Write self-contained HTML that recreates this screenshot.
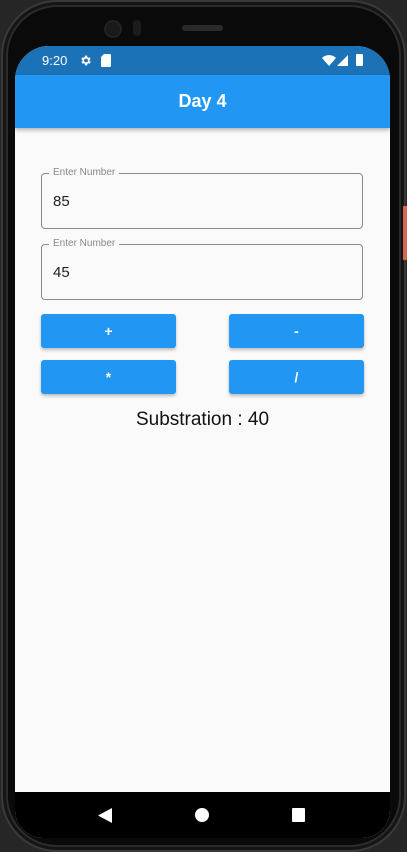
<!DOCTYPE html>
<html><head><style>
*{margin:0;padding:0;box-sizing:border-box}
body{width:407px;height:852px;background:#262626;overflow:hidden;position:relative;font-family:"Liberation Sans",Roboto,sans-serif}
.phone{position:absolute;left:1px;top:0;width:405px;height:852px;border-radius:56px;background:#0a0a0a;border:2px solid #3a3a3a;box-shadow:inset 0 0 0 3px #151515,inset 0 0 0 5px #2c2c2c}
.screen{position:absolute;left:15px;top:46px;width:375px;height:792px;border-radius:34px 34px 28px 28px;overflow:hidden;background:#fafafa}
.status{height:29px;background:#1c72b6;color:#fff;font-size:13px;position:relative}
.app{height:53px;background:#2196f3;color:#fff;font-weight:bold;font-size:18px;text-align:center;line-height:53px;box-shadow:0 2px 4px rgba(0,0,0,.3);position:relative;z-index:1}
.field{position:absolute;left:26px;width:322px;height:56px;border:1px solid #8a8a8a;border-radius:4px}
.field .lab{position:absolute;left:7px;top:-7px;background:#fafafa;padding:0 4px;font-size:10px;color:#888}
.field .v{position:absolute;left:11px;top:19px;font-size:15px;color:#222}
.btn{position:absolute;width:135px;height:34px;background:#2196f3;border-radius:3px;color:#fff;font-size:14px;font-weight:bold;text-align:center;line-height:34px;box-shadow:0 2px 3px rgba(0,0,0,.25)}
.nav{position:absolute;left:0;top:746px;width:375px;height:46px;background:#000}
</style></head><body>
<div class="phone"></div>
<div style="position:absolute;left:104px;top:20px;width:18px;height:18px;border-radius:50%;background:#1a1a1a;border:2px solid #222"></div>
<div style="position:absolute;left:133px;top:20px;width:8px;height:16px;border-radius:4px;background:#1c1c1c"></div>
<div style="position:absolute;left:182px;top:25px;width:41px;height:6px;border-radius:3px;background:#2a2a2a"></div>
<div style="position:absolute;left:403px;top:206px;width:4px;height:54px;background:#d9684e"></div>
<div class="screen">
 <div class="status">
  <span style="position:absolute;left:27px;top:7px">9:20</span>
  <svg style="position:absolute;left:64px;top:8px" width="13" height="13" viewBox="0 0 24 24"><path fill="#fff" d="M19.4 13a7.5 7.5 0 000-2l2.1-1.6-2-3.5-2.5 1a7 7 0 00-1.7-1L15 3h-4l-.4 2.9a7 7 0 00-1.7 1l-2.5-1-2 3.5L6.6 11a7.5 7.5 0 000 2l-2.1 1.6 2 3.5 2.5-1a7 7 0 001.7 1L11 21h4l.4-2.9a7 7 0 001.7-1l2.5 1 2-3.5zM13 15.5a3.5 3.5 0 110-7 3.5 3.5 0 010 7z"/></svg>
  <svg style="position:absolute;left:86px;top:8px" width="10" height="13" viewBox="0 0 10 13"><path fill="#fff" d="M3 0h6a1 1 0 011 1v11a1 1 0 01-1 1H1a1 1 0 01-1-1V3z"/></svg>
  <svg style="position:absolute;left:307px;top:9px" width="14" height="11" viewBox="0 0 14 11"><path fill="#fff" d="M0 3a10 10 0 0114 0L7 11z"/></svg>
  <svg style="position:absolute;left:322px;top:9px" width="11" height="11" viewBox="0 0 11 11"><path fill="#fff" d="M11 0v11H0z"/></svg>
  <div style="position:absolute;left:341px;top:8px;width:7px;height:12px;background:#fff;border-radius:1px"></div>
 </div>
 <div class="app">Day 4</div>
 <div class="field" style="top:127px"><span class="lab">Enter Number</span><span class="v">85</span></div>
 <div class="field" style="top:198px"><span class="lab">Enter Number</span><span class="v">45</span></div>
 <div class="btn" style="left:26px;top:268px">+</div>
 <div class="btn" style="left:214px;top:268px">-</div>
 <div class="btn" style="left:26px;top:314px">*</div>
 <div class="btn" style="left:214px;top:314px">/</div>
 <div style="position:absolute;left:0;width:375px;top:363px;text-align:center;font-size:19px;color:#111">Substration : 40</div>
 <div class="nav">
  <svg style="position:absolute;left:83px;top:16px" width="14" height="15" viewBox="0 0 14 15"><path fill="#fff" d="M0 7.5L14 0v15z"/></svg>
  <div style="position:absolute;left:180px;top:16px;width:14px;height:14px;border-radius:50%;background:#fff"></div>
  <div style="position:absolute;left:277px;top:16px;width:13px;height:14px;background:#fff;border-radius:1px"></div>
 </div>
</div>
</body></html>
